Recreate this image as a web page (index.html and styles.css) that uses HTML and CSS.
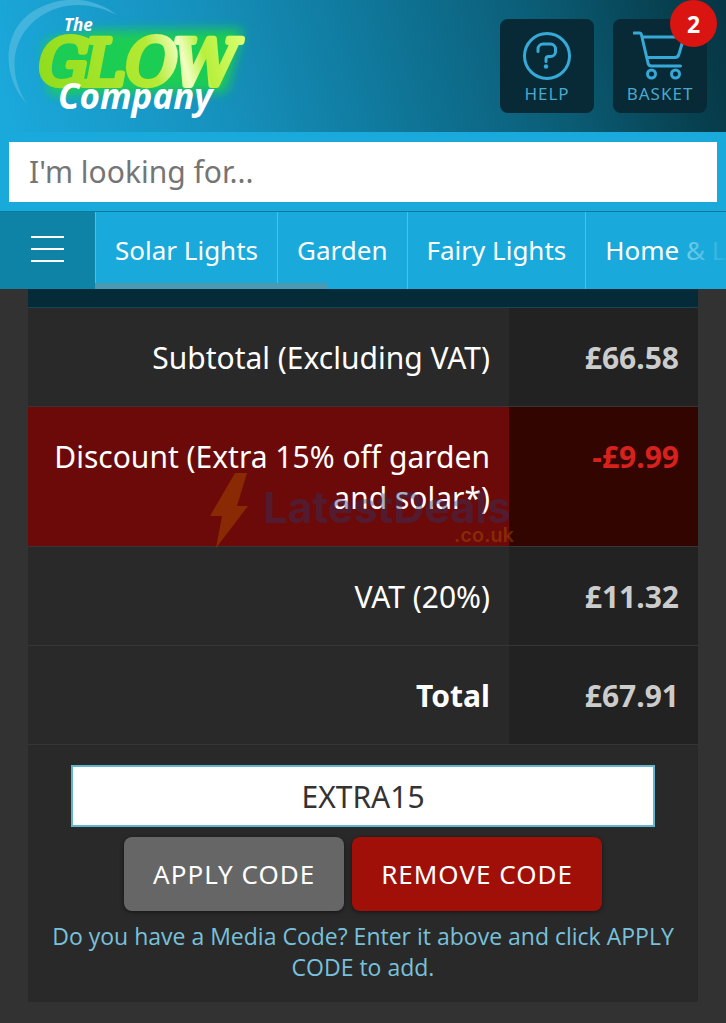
FILE: index.html
```
<!DOCTYPE html>
<html lang="en">
<head>
  <meta charset="UTF-8">
  <meta name="viewport" content="width=device-width, initial-scale=1">
  <title>Basket - The Glow Company</title>
  <link rel="stylesheet" href="styles.css">
</head>
<body>
  <header class="header">
    <a class="logo" href="#" aria-label="The Glow Company">
      <svg width="264" height="132" viewBox="0 0 264 132">
        <defs>
          <linearGradient id="tube" gradientUnits="userSpaceOnUse" x1="40" y1="90" x2="240" y2="30">
            <stop offset="0" stop-color="#8fdc1b"/>
            <stop offset=".55" stop-color="#b5ea35"/>
            <stop offset=".7" stop-color="#f0ffc0"/>
            <stop offset=".8" stop-color="#b8ef3c"/>
            <stop offset="1" stop-color="#d8ff70"/>
          </linearGradient>
          <filter id="blur" x="-20%" y="-40%" width="140%" height="180%"><feGaussianBlur stdDeviation="6"/></filter>
        </defs>
        <path class="arc" d="M27 104 C0 75 1 25 41 7 C67 -5 95 -2 117 15 C91 2 66 2 46 13 C11 32 6 72 27 104Z"/>
        <path class="halo" d="M44 42 L94 31 L243 29 L226 92 L50 95 Z" filter="url(#blur)"/>
        <g class="glow">
          <text x="39" y="85">G</text><text x="84" y="85">L</text><text x="126" y="85">O</text><text x="173" y="85">W</text>
        </g>
        <text class="logo-the" x="64" y="31">The</text>
        <text class="logo-company" x="58" y="109">Company</text>
      </svg>
    </a>
    <div class="tools">
      <a class="tool" href="#">
        <svg width="50" height="50" viewBox="0 0 50 50">
          <circle cx="25" cy="25" r="22.5"/>
          <path d="M16 20.500v-2.500a5 5 0 0 1 5-5h7.500a5 5 0 0 1 5 5v2.500a5 5 0 0 1-5 5h-2a2.500 2.500 0 0 0-2.500 2.500v2.500"/>
          <circle class="dot" cx="24" cy="35.500" r="2.200"/>
        </svg>
        HELP
      </a>
      <a class="tool" href="#">
        <svg width="54" height="50" viewBox="0 0 54 50">
          <path d="M1 2h5.500q1.500 0 2 2l6.500 28q.5 3 3.500 3h29M9 6h42l-5 17q-1 3.500-4 3.500H14"/>
          <circle cx="18.500" cy="43" r="4"/><circle cx="42.500" cy="43" r="4"/>
        </svg>
        BASKET
        <span class="badge">2</span>
      </a>
    </div>
  </header>

  <form class="search"><input type="search" placeholder="I'm looking for..." aria-label="Search"></form>

  <nav class="nav">
    <button class="menu-btn" aria-label="Menu"><span></span><span></span><span></span></button>
    <div class="tabs">
      <a href="#">Solar Lights</a>
      <a href="#">Garden</a>
      <a href="#">Fairy Lights</a>
      <a href="#">Home &amp; Living</a>
      <span class="scrollbar"></span>
    </div>
  </nav>

  <main class="basket">
    <table class="totals">
      <tr><th>Subtotal (Excluding VAT)</th><td>£66.58</td></tr>
      <tr class="discount"><th>Discount (Extra 15% off garden and solar*)</th><td>-£9.99</td></tr>
      <tr><th>VAT (20%)</th><td>£11.32</td></tr>
      <tr class="total"><th>Total</th><td>£67.91</td></tr>
    </table>
    <form class="code">
      <input id="media-code" type="text" value="EXTRA15">
      <div class="buttons">
        <button class="btn" type="button">APPLY CODE</button>
        <button class="btn remove" type="button">REMOVE CODE</button>
      </div>
      <label for="media-code">Do you have a Media Code? Enter it above and click APPLY CODE to add.</label>
    </form>
    <svg class="watermark" width="310" height="78" viewBox="0 0 310 78">
      <path class="bolt" d="M27 1h12L29 34h11L8 76l6-32H2z"/>
      <text class="mark-name" x="55" y="51">LatestDeals</text>
      <text class="mark-tld" x="246" y="70">.co.uk</text>
    </svg>
  </main>
</body>
</html>
```
FILE: styles.css
```
:root { --font: 'Noto Sans', 'Open Sans', sans-serif; --blue: #19aadb; --line: #363636; --card: #292929; }
* { box-sizing: border-box; }
body { margin:0; min-height:100vh; font-family:var(--font); font-size:30px; line-height:41px; color:#fff; background:#323232; }
a { color:inherit; text-decoration:none; }

.header { height:132px; display:flex; justify-content:space-between; background:linear-gradient(75deg,#1ba9dc 0%,#1691bd 30%,#107a9e 50%,#0b5c75 75%,#07404f 92%,#063544 100%); }
.logo svg { display:block; }
.arc { fill:#52b9df; opacity:.75; }
.halo { fill:#1fd04e; opacity:.95; }
.glow { font:italic 63px 'DejaVu Serif', serif; fill:url(#tube); stroke:url(#tube); stroke-width:6; stroke-linejoin:round; }
.logo-the { font:italic 700 17px var(--font); fill:#fff; }
.logo-company { font:italic 700 35px var(--font); fill:#fff; }

.tools { display:flex; gap:19px; padding:19px 19px 0 0; }
.tool { position:relative; width:94px; height:94px; padding-top:12px; display:flex; flex-direction:column; align-items:center; border-radius:8px; background:#072a36; color:#4aa8cc; font-size:17px; line-height:25px; letter-spacing:1px; }
.tool svg { fill:none; stroke:#37a9d7; stroke-width:3; stroke-linecap:round; stroke-linejoin:round; }
.tool .dot { fill:#37a9d7; stroke:none; }
.badge { position:absolute; top:-19px; right:-10px; width:47px; height:47px; border-radius:50%; background:#da1410; color:#fff; font-size:23px; font-weight:700; line-height:49px; text-align:center; letter-spacing:0; }

.search { padding:10px 9px 9px; background:var(--blue); }
.search input { display:block; width:100%; height:60px; padding:0 20px 2px; border:0; border-radius:0; background:#fff; font:30px var(--font); color:#333; outline:none; -webkit-appearance:none; }
.search input::placeholder { color:#757575; }

.nav { display:flex; height:78px; border-top:1px solid #087ca0; background:var(--blue); }
.menu-btn { flex:none; width:95px; padding:0 0 4px; border:0; background:#0e83a5; display:flex; flex-direction:column; align-items:center; justify-content:center; gap:10px; cursor:pointer; }
.menu-btn span { width:33px; height:2px; background:#fff; }
.tabs { position:relative; flex:1; min-width:0; display:flex; overflow:hidden; }
.tabs a { flex:none; padding:0 19px; border-left:1px solid #4fc0e4; font-size:26px; line-height:76px; }
.tabs::after { content:''; position:absolute; top:0; right:0; bottom:0; width:40px; background:linear-gradient(90deg,rgba(25,170,219,.6),rgba(25,170,219,.95)); }
.scrollbar { position:absolute; left:0; bottom:0; width:37%; height:6px; background:#4b9ab4; }

.basket { position:relative; margin:0 28px; border-top:18px solid #052b39; background:var(--card); }
.totals { width:100%; border-collapse:separate; border-spacing:0; }
.totals th, .totals td { padding:29px 19px 28px; border-top:1px solid var(--line); text-align:right; vertical-align:top; font-weight:400; }
.totals td { width:189px; background:#222; color:#ccc; font-weight:700; }
.totals tr:first-child > * { border-top-color:#174655; }
.totals .discount th { background:#6b0a08; }
.totals .discount td { background:#330500; color:#d7211d; }
.totals .total th { font-weight:700; }

.code { padding:20px 20px 19px; border-top:1px solid var(--line); display:flex; flex-direction:column; align-items:center; text-align:center; }
.code input { width:calc(100% - 46px); height:62px; padding:0; border:2px solid #62b4cf; border-radius:0; background:#fff; color:#333; font:30px var(--font); text-align:center; outline:none; }
.buttons { display:flex; gap:8px; margin:10px 0; }
.btn { height:74px; padding:0 29px; border:0; border-radius:8px; background:#666; color:#fff; font:26px var(--font); letter-spacing:1px; box-shadow:0 1px 4px rgba(0,0,0,.5); cursor:pointer; }
.btn.remove { background:#a01009; }
.code label { color:#78c1dc; font-family:'Open Sans', sans-serif; font-size:23px; line-height:31px; }

.watermark { position:absolute; top:165px; left:50%; margin-left:-155px; pointer-events:none; }
.bolt { fill:#b65a00; opacity:.4; }
.mark-name { font:700 43px Inter, sans-serif; fill:#31366b; opacity:.4; }
.mark-tld { font:600 20px Inter, sans-serif; fill:#b65a00; opacity:.4; }
```
